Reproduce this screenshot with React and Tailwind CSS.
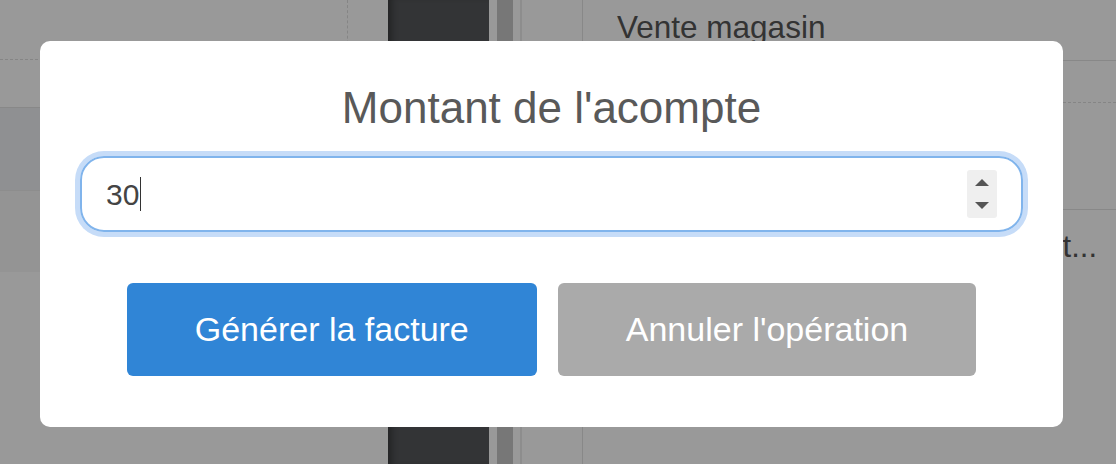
const Spinner = () => (
  <div className="flex h-[48px] w-[30px] flex-col items-center justify-center gap-[16px] rounded-[3px] bg-[#efefef]">
    <svg width="14" height="7" viewBox="0 0 14 7">
      <path d="M7 0L14 7H0Z" fill="#555" />
    </svg>
    <svg width="14" height="7" viewBox="0 0 14 7">
      <path d="M0 0H14L7 7Z" fill="#555" />
    </svg>
  </div>
);

const App = () => {
  return (
    <div className="relative flex h-[464px] w-full overflow-hidden bg-white font-['Liberation_Sans',Arial,sans-serif]">
      {/* left panel */}
      <div className="flex w-[388px] shrink-0 flex-col">
        <div className="flex h-[60px] border-b border-dashed border-[#dedede]">
          <div className="w-[348px] border-r border-dashed border-[#dedede]" />
        </div>
        <div className="h-[47px]" />
        <div className="h-[83px] border-t border-[#e3e3e3] bg-[#eef0f3]" />
        <div className="h-[82px] border-t border-[#ececec] bg-[#f7f7f7]" />
      </div>

      {/* dark column + strips */}
      <div className="w-[101px] shrink-0 bg-[#55575a] shadow-[inset_8px_0_6px_-4px_rgba(0,0,0,0.3)]" />
      <div className="w-[8px] shrink-0 bg-white" />
      <div className="w-[16px] shrink-0 bg-[#c6c6c6]" />
      <div className="w-[7px] shrink-0 bg-white" />
      <div className="w-[2px] shrink-0 bg-[#ebebeb]" />
      <div className="w-[61px] shrink-0 border-r border-[#e3e3e3]" />

      {/* right panel */}
      <div className="flex flex-1 flex-col">
        <div className="flex h-[61px] items-center border-b border-[#e3e3e3] pb-[5px] pl-[34px] text-[31.5px] text-[#555]">
          Vente magasin
        </div>
        <div className="h-[42px] border-b border-dashed border-[#dedede]" />
        <div className="h-[107px] border-b border-[#e3e3e3]" />
        <div className="flex justify-end pr-[19px] pt-[19px] text-[31px] leading-[36px] text-[#555]">
          Règlement acompte et...
        </div>
      </div>

      {/* modal */}
      <div className="absolute inset-0 bg-black/40 pl-[40px] pt-[41px]">
        <div className="flex h-[386px] w-[1023px] flex-col items-center rounded-[10px] bg-white pt-[42px]">
          <h2 className="text-[44px] font-normal leading-[50px] text-[#595959]">Montant de l'acompte</h2>

          <div className="mt-[23px] flex h-[76px] w-[943px] items-center rounded-[24px] border-2 border-[#80b4ec] pl-[24px] pr-[24px] shadow-[0_0_0_5px_#c6dcf8]">
            <span className="text-[30px] text-[#444]">30</span>
            <span className="ml-px h-[34px] w-px bg-[#333]" />
            <div className="ml-auto">
              <Spinner />
            </div>
          </div>

          <div className="mt-[51px] flex gap-[21px]">
            <button className="h-[93px] rounded-[6px] bg-[#3085d6] px-[68px] text-[34px] text-white">
              Générer la facture
            </button>
            <button className="h-[93px] rounded-[6px] bg-[#aaaaaa] px-[68px] text-[34px] text-white">
              Annuler l'opération
            </button>
          </div>
        </div>
      </div>
    </div>
  );
};

export default App;
